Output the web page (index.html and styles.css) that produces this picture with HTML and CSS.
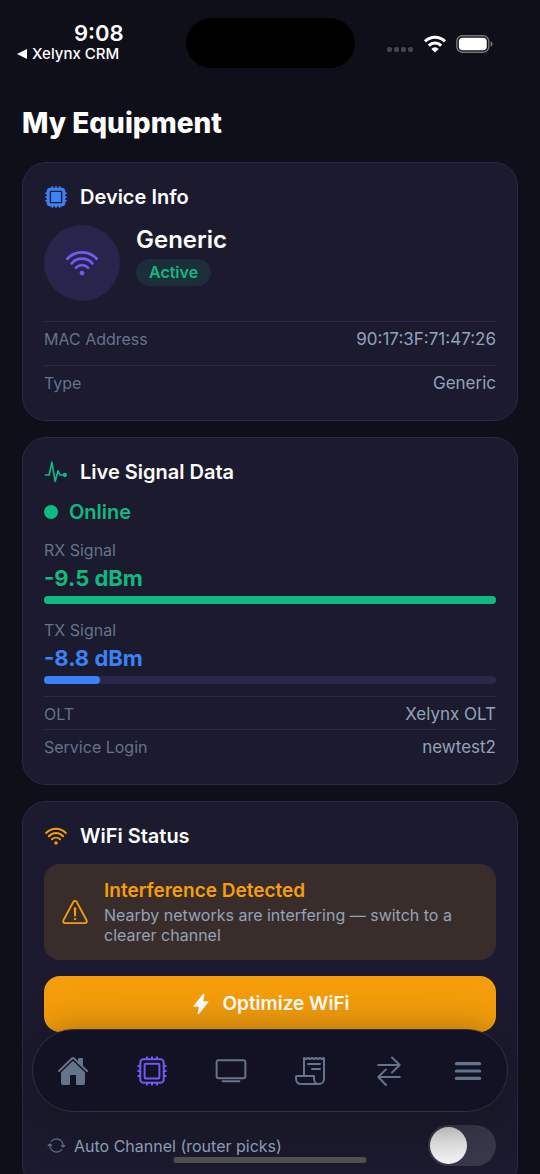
FILE: index.html
```html
<!DOCTYPE html>
<html lang="en">
<head>
<meta charset="utf-8">
<meta name="viewport" content="width=device-width, initial-scale=1">
<title>My Equipment</title>
<link rel="stylesheet" href="styles.css">
</head>
<body>
<div class="screen">
  <header class="status">
    <div class="status-left">
      <span class="time">9:08</span>
      <a class="back" href="#"><svg class="back-arrow" viewBox="0 0 10 10" aria-hidden="true"><path d="M0 5 10 0V10Z"/></svg>Xelynx CRM</a>
    </div>
    <div class="island"></div>
    <div class="status-right">
      <svg class="cell" viewBox="0 0 27 6" aria-hidden="true"><rect width="5" height="5" rx="2"/><rect x="7" width="5" height="5" rx="2"/><rect x="14" width="5" height="5" rx="2"/><rect x="21" width="5" height="5" rx="2"/></svg>
      <svg class="wifi-bars" viewBox="0 0 24 18" aria-hidden="true"><path d="M2 6.4a14 14 0 0 1 20 0M5.8 10.6a8.7 8.7 0 0 1 12.4 0"/><path class="solid" d="M12 17.6 8.3 13.9a5.2 5.2 0 0 1 7.4 0Z"/></svg>
      <svg class="battery" viewBox="0 0 37 18" aria-hidden="true"><rect class="shell" x=".8" y=".8" width="32" height="16.4" rx="5.5"/><rect x="2.8" y="2.8" width="28" height="12.4" rx="3.8"/><path class="cap" d="M34.6 6.2q2 .8 2 2.8t-2 2.8Z"/></svg>
    </div>
  </header>

  <main class="content">
    <h1>My Equipment</h1>

    <section class="card">
      <h2 class="card-title blue">
        <svg class="icon" viewBox="0 0 512 512" aria-hidden="true"><path class="pins" d="M256 80V26M336 80V26M176 80V26M256 486v-58M336 486v-58M176 486v-58M432 256h54M432 336h54M432 176h54M26 256h58M26 336h58M26 176h58"/><rect class="fill" x="56" y="56" width="400" height="400" rx="84"/><rect class="ring" x="136" y="136" width="240" height="240" rx="14"/></svg>
        <span>Device Info</span>
      </h2>
      <div class="device">
        <div class="avatar"><svg class="wifi" viewBox="0 0 512 512" aria-hidden="true"><path d="M36 191A302 302 0 0 1 476 191M101 261A207 207 0 0 1 411 261M166 326A126 126 0 0 1 346 326"/><circle cx="256" cy="407" r="36"/></svg></div>
        <div class="device-text">
          <strong class="device-name">Generic</strong>
          <span class="badge">Active</span>
        </div>
      </div>
      <dl class="rows spaced">
        <div class="row"><dt>MAC Address</dt><dd>90:17:3F:71:47:26</dd></div>
        <div class="row"><dt>Type</dt><dd>Generic</dd></div>
      </dl>
    </section>

    <section class="card">
      <h2 class="card-title green">
        <svg class="icon line pulse" viewBox="0 0 512 512" aria-hidden="true"><path d="M32 320h78l58-276 70 412 62-226 42 90h90"/><circle class="fill" cx="444" cy="320" r="46"/></svg>
        <span>Live Signal Data</span>
      </h2>
      <div class="online"><span class="dot"></span>Online</div>
      <div class="signal green">
        <span class="signal-label">RX Signal</span>
        <span class="signal-value">-9.5 dBm</span>
        <div class="track"><div class="bar" style="width:100%"></div></div>
      </div>
      <div class="signal blue">
        <span class="signal-label">TX Signal</span>
        <span class="signal-value">-8.8 dBm</span>
        <div class="track"><div class="bar" style="width:12.4%"></div></div>
      </div>
      <dl class="rows">
        <div class="row"><dt>OLT</dt><dd>Xelynx OLT</dd></div>
        <div class="row"><dt>Service Login</dt><dd>newtest2</dd></div>
      </dl>
    </section>

    <section class="card">
      <h2 class="card-title amber">
        <svg class="icon wifi" viewBox="0 0 512 512" aria-hidden="true"><path d="M46 191A290 290 0 0 1 466 191M105 261A202 202 0 0 1 407 261M170 326A122 122 0 0 1 342 326"/><circle cx="256" cy="404" r="38"/></svg>
        <span>WiFi Status</span>
      </h2>
      <div class="alert">
        <svg class="alert-icon line" viewBox="0 0 512 512" aria-hidden="true"><path d="M85.57 446.25h340.86a32 32 0 0 0 28.17-47.17L284.18 82.58c-12.09-22.44-44.27-22.44-56.36 0L57.4 399.08a32 32 0 0 0 28.17 47.17z"/><path d="M250.26 195.39l5.74 122 5.73-121.95a5.74 5.74 0 0 0-5.79-6 5.74 5.74 0 0 0-5.68 5.95z"/><circle class="fill" cx="256" cy="377" r="20"/></svg>
        <div class="alert-text">
          <strong>Interference Detected</strong>
          <p>Nearby networks are interfering — switch to a clearer channel</p>
        </div>
      </div>
      <button class="optimize" type="button">
        <svg viewBox="0 0 512 512" aria-hidden="true"><path d="M194.82 496a18.36 18.36 0 0 1-18.1-21.53v-.11L204.83 320H96a16 16 0 0 1-12.44-26.06L302.73 23a18.45 18.45 0 0 1 32.8 13.71c0 .3-.08.59-.13.89L307.19 192H416a16 16 0 0 1 12.44 26.06L209.24 489a18.45 18.45 0 0 1-14.42 7z"/></svg>
        Optimize WiFi
      </button>
      <div class="auto">
        <svg class="line" viewBox="0 0 512 512" aria-hidden="true"><path d="M434.67 285.59v-29.8c0-98.73-80.24-178.79-179.2-178.79a179 179 0 0 0-140.14 67.36m-38.53 82v29.8C76.8 355 157 435 256 435a180.45 180.45 0 0 0 140-66.92M32 256l44-44 46 44M480 256l-44 44-46-44"/></svg>
        <label for="auto-channel">Auto Channel (router picks)</label>
        <input class="switch" id="auto-channel" type="checkbox" role="switch">
      </div>
    </section>
  </main>

  <nav class="tabs" aria-label="Main">
    <a class="tab" href="#" aria-label="Home"><svg class="solid" viewBox="0 0 512 512"><path d="M261.56 101.28a8 8 0 0 0-11.06 0L66.4 277.15a8 8 0 0 0-2.47 5.79L63.9 448a32 32 0 0 0 32 32H192a16 16 0 0 0 16-16V328a8 8 0 0 1 8-8h80a8 8 0 0 1 8 8v136a16 16 0 0 0 16 16h96.06a32 32 0 0 0 32-32V282.94a8 8 0 0 0-2.47-5.79z"/><path d="M490.91 244.15l-74.8-71.56V64a16 16 0 0 0-16-16h-48a16 16 0 0 0-16 16v32l-57.92-55.38C272.77 35.14 264.71 32 256 32c-8.68 0-16.72 3.14-22.14 8.63l-212.7 203.5c-6.22 6-7 15.87-1.34 22.37A16 16 0 0 0 43 267.56L250.5 69.28a8 8 0 0 1 11.06 0l207.52 198.28a16 16 0 0 0 22.59-.44c6.14-6.36 5.63-16.86-.76-22.97z"/></svg></a>
    <a class="tab active" href="#" aria-label="Equipment" aria-current="page"><svg class="line" viewBox="0 0 512 512"><rect x="68" y="68" width="376" height="376" rx="54"/><rect x="138" y="138" width="236" height="236" rx="16"/><path d="M256 68V36M336 68V36M176 68V36M256 476v-32M336 476v-32M176 476v-32M444 256h32M444 336h32M444 176h32M36 256h32M36 336h32M36 176h32"/></svg></a>
    <a class="tab" href="#" aria-label="TV"><svg class="line" viewBox="0 0 512 512"><rect x="26" y="84" width="460" height="288" rx="32"/><path d="M122 420h268"/></svg></a>
    <a class="tab" href="#" aria-label="Billing"><svg class="line" viewBox="0 0 512 512"><path d="M160 336V48l32 16 32-16 31.94 16 32.37-16L320 64l31.79-16 31.93 16L416 48l32.01 16L480 48v224M480 272v112a80 80 0 0 1-80 80 80 80 0 0 1-80-80v-48H48a15.86 15.86 0 0 0-16 16c0 64 6.74 112 80 112h288M224 144h192M288 224h128"/></svg></a>
    <a class="tab" href="#" aria-label="Transfers"><svg class="line" viewBox="0 0 512 512"><path d="M304 40l124 120-124 120M420 160H84M208 480L84 352l124-122M94 352h336"/></svg></a>
    <a class="tab" href="#" aria-label="Menu"><svg class="line menu" viewBox="0 0 512 512"><path d="M70 138h372M70 256h372M70 374h372"/></svg></a>
  </nav>
  <div class="home-indicator"></div>
</div>
</body>
</html>
```
FILE: styles.css
```css
* {
  box-sizing: border-box;
}

:root {
  --bg: #0f0f1a;
  --card: #1b1a2e;
  --line: #28284a;
  --muted: #64748b;
  --soft: #94a3b8;
  --green: #10b981;
  --blue: #3b82f6;
  --amber: #f59e0b;
  --purple: #6c5cf0;
}

body {
  margin: 0;
  background: var(--bg);
  color: #fff;
  font-family: Inter, "Liberation Sans", sans-serif;
  font-size: 16px;
}

h1, h2, dl, dd, p {
  margin: 0;
}

a {
  color: inherit;
  text-decoration: none;
}

svg {
  display: block;
  flex: none;
}

.screen {
  height: 100vh;
  overflow-y: auto;
  scrollbar-width: none;
}

/* Status bar */
.status {
  display: grid;
  grid-template-columns: 1fr 169px 1fr;
  padding: 18px 0 0;
}

.status-left {
  display: flex;
  flex-direction: column;
  padding: 4px 0 0 17px;
}

.time {
  padding-left: 57px;
  font-size: 22px;
  font-weight: 600;
  line-height: 23px;
}

.back {
  display: flex;
  align-items: center;
  gap: 5px;
  font-size: 15px;
  font-weight: 500;
  line-height: 18px;
}

.back-arrow {
  width: 10px;
  height: 10px;
  fill: #fff;
}

.island {
  height: 50px;
  border-radius: 25px;
  background: #000;
}

.status-right {
  display: flex;
  align-items: center;
  justify-content: flex-end;
  gap: 9px;
  height: 52px;
  padding-right: 47px;
}

.cell {
  width: 27px;
  height: 6px;
  margin-top: 12px;
  fill: #454552;
}

.wifi-bars {
  width: 24px;
  height: 18px;
  fill: none;
  stroke: #fff;
  stroke-width: 3;
}

.wifi-bars .solid {
  fill: #fff;
  stroke: none;
}

.battery {
  width: 37px;
  height: 18px;
  fill: #fff;
}

.battery .shell {
  fill: none;
  stroke: #777780;
  stroke-width: 1.4;
}

.battery .cap {
  fill: #777780;
}

/* Content */
.content {
  display: flex;
  flex-direction: column;
  gap: 16px;
  padding: 35px 22px 120px;
}

h1 {
  margin-bottom: 5px;
  font-size: 28px;
  font-weight: 800;
  line-height: 36px;
}

.card {
  padding: 22px 21px;
  border: 1px solid var(--line);
  border-radius: 24px;
  background: var(--card);
}

.card-title {
  display: flex;
  align-items: center;
  gap: 12px;
  margin-bottom: 16px;
  font-size: 20px;
  font-weight: 600;
  line-height: 24px;
}

.card-title span {
  color: #fff;
}

.green {
  color: var(--green);
}

.blue {
  color: var(--blue);
}

.amber {
  color: var(--amber);
}

.icon {
  width: 24px;
  height: 24px;
}

.fill {
  fill: currentColor;
  stroke: none;
}

.pins {
  stroke: currentColor;
  stroke-width: 36;
}

.ring {
  fill: none;
  stroke: var(--card);
  stroke-width: 30;
}

.line {
  fill: none;
  stroke: currentColor;
  stroke-width: 32;
  stroke-linecap: round;
  stroke-linejoin: round;
}

.line.pulse {
  stroke-width: 36;
}

.wifi path {
  fill: none;
  stroke: currentColor;
  stroke-width: 42;
  stroke-linecap: round;
}

.wifi circle {
  fill: currentColor;
}

.device {
  display: flex;
  gap: 16px;
  margin-bottom: 20px;
}

.avatar {
  display: grid;
  place-items: center;
  width: 76px;
  height: 76px;
  border-radius: 50%;
  background: #28244c;
  color: var(--purple);
}

.avatar svg {
  width: 34px;
  height: 34px;
}

.device-text {
  display: flex;
  flex-direction: column;
  align-items: flex-start;
  gap: 4px;
}

.device-name {
  font-size: 24px;
  font-weight: 600;
  line-height: 30px;
}

.badge {
  padding: 0 13px;
  border-radius: 14px;
  background: #1a2f3a;
  color: var(--green);
  font-weight: 600;
  line-height: 27px;
}

.rows {
  display: flex;
  flex-direction: column;
}

.rows.spaced {
  gap: 11px;
}

.row {
  display: flex;
  justify-content: space-between;
  padding: 5px 0 3px;
  border-top: 1px solid var(--line);
  line-height: 24px;
}

.row dt {
  color: var(--muted);
}

.row dd {
  color: var(--soft);
  font-size: 17px;
}

.online {
  display: flex;
  align-items: center;
  gap: 11px;
  margin-bottom: 16px;
  color: var(--green);
  font-size: 20px;
  font-weight: 600;
  line-height: 24px;
}

.dot {
  width: 14px;
  height: 14px;
  border-radius: 50%;
  background: currentColor;
}

.signal {
  display: flex;
  flex-direction: column;
  gap: 4px;
  margin-bottom: 16px;
}

.signal + .rows {
  margin-top: -4px;
}

.signal-label {
  color: var(--muted);
  line-height: 20px;
}

.signal-value {
  font-size: 22px;
  font-weight: 700;
  line-height: 28px;
}

.track {
  height: 8px;
  border-radius: 4px;
  background: #2a284a;
}

.bar {
  height: 100%;
  border-radius: 4px;
  background: currentColor;
}

.alert {
  display: flex;
  align-items: center;
  gap: 14px;
  padding: 15px 16px;
  border-radius: 16px;
  background: #382d2a;
  color: var(--amber);
}

.alert-icon {
  width: 30px;
  height: 30px;
}

.alert-text strong {
  display: block;
  margin-bottom: 2px;
  font-size: 19px;
  font-weight: 600;
  line-height: 24px;
}

.alert-text p {
  color: var(--soft);
  line-height: 20px;
}

.optimize {
  display: flex;
  align-items: center;
  justify-content: center;
  gap: 10px;
  width: 100%;
  height: 56px;
  margin-top: 16px;
  border: 0;
  border-radius: 16px;
  background: var(--amber);
  color: #fff;
  font: 600 19px/24px Inter, "Liberation Sans", sans-serif;
}

.optimize svg {
  width: 22px;
  height: 22px;
  fill: currentColor;
}

.auto {
  display: flex;
  align-items: center;
  gap: 8px;
  margin-top: 93px;
  padding-left: 3px;
  color: var(--soft);
}

.auto svg {
  width: 19px;
  height: 19px;
  color: var(--muted);
}

.auto label {
  flex: 1;
}

.switch {
  appearance: none;
  width: 68px;
  height: 41px;
  margin: 0;
  padding: 2px;
  border-radius: 21px;
  background: #39384a;
}

.switch::before {
  content: "";
  display: block;
  width: 37px;
  height: 37px;
  border-radius: 50%;
  background: linear-gradient(#dcdcdc, #f4f4f4);
}

.switch:checked {
  background: var(--green);
}

.switch:checked::before {
  margin-left: auto;
}

/* Floating tab bar */
.tabs {
  position: fixed;
  right: 32px;
  bottom: 62px;
  left: 32px;
  display: flex;
  height: 83px;
  border: 1px solid #302f43;
  border-radius: 42px;
  background: #131224;
  box-shadow: 0 8px 44px rgba(18, 18, 20, 0.5);
}

.tab {
  display: grid;
  flex: 1;
  place-items: center;
  color: var(--muted);
}

.tab.active {
  color: var(--purple);
}

.tab svg {
  width: 32px;
  height: 32px;
}

.tab .solid {
  fill: currentColor;
}

.tab .menu {
  stroke-width: 50;
}

.home-indicator {
  position: fixed;
  bottom: 11px;
  left: 50%;
  width: 193px;
  height: 6px;
  border-radius: 3px;
  background: #50504f;
  transform: translateX(-50%);
}
```
